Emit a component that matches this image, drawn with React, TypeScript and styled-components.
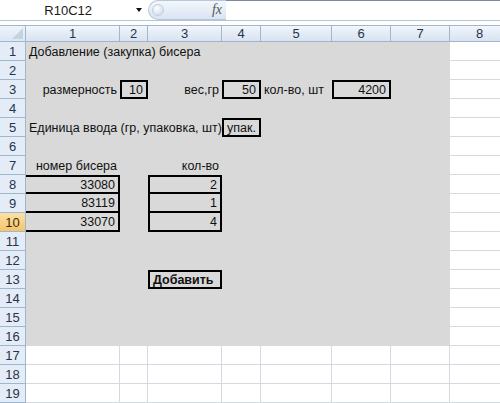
import React, { FunctionComponent } from "react";
import styled, { createGlobalStyle } from "styled-components";

const GlobalStyle = createGlobalStyle`
  html, body {
    margin: 0;
    padding: 0;
    background: #fff;
  }
  body {
    font-family: "Liberation Sans", Arial, sans-serif;
  }
`;

const COLS = [94, 28, 74, 39, 71, 59, 59, 60];
const TEMPLATE = `26px ${COLS.map((w) => w + "px").join(" ")}`;
const SHADED_ROWS = 16;
const SHADED_COLS = 7;

interface CellData {
  text?: string;
  span?: number;
  align?: "left" | "right";
  bold?: boolean;
  edges?: string;
}

const ROWS: CellData[][] = [
  [{ span: 3, text: "Добавление (закупка) бисера" }],
  [],
  [
    { text: "размерность", align: "right" },
    { text: "10", align: "right", edges: "trbl" },
    { text: "вес,гр", align: "right" },
    { text: "50", align: "right", edges: "trbl" },
    { text: "кол-во, шт" },
    { text: "4200", align: "right", edges: "trbl" },
  ],
  [],
  [{ span: 3, text: "Единица ввода (гр, упаковка, шт)" }, { text: "упак.", edges: "trbl" }],
  [],
  [{ text: "номер бисера", align: "right" }, {}, { text: "кол-во", align: "right" }],
  [{ text: "33080", align: "right", edges: "trb" }, {}, { text: "2", align: "right", edges: "trbl" }],
  [{ text: "83119", align: "right", edges: "rb" }, {}, { text: "1", align: "right", edges: "rbl" }],
  [{ text: "33070", align: "right", edges: "rb" }, {}, { text: "4", align: "right", edges: "rbl" }],
  [],
  [],
  [{}, {}, { text: "Добавить", bold: true, edges: "trbl" }],
  [],
  [],
  [],
  [],
  [],
  [],
];

const SELECTED_ROW = 10;

const App: FunctionComponent = () => (
  <>
    <GlobalStyle />
    <Window>
      <FormulaBar>
        <NameBox>
          <span>R10C12</span>
          <DropArrow />
        </NameBox>
        <FxButton>
          <Grip />
          <Fx>fx</Fx>
        </FxButton>
        <FormulaInput />
      </FormulaBar>
      <Sheet>
        <HeaderRow>
          <Corner>
            <svg width="12" height="12" viewBox="0 0 12 12">
              <polygon points="12,1 12,12 1,12" fill="#c5d2e2" />
            </svg>
          </Corner>
          {COLS.map((_, i) => (
            <ColHeader key={i}>{i + 1}</ColHeader>
          ))}
        </HeaderRow>
        {ROWS.map((cells, r) => (
          <SheetRow key={r} cells={cells} index={r + 1} />
        ))}
      </Sheet>
    </Window>
  </>
);

export default App;

interface RowProps {
  cells: CellData[];
  index: number;
}

const SheetRow: FunctionComponent<RowProps> = ({ cells, index }) => {
  const filled: CellData[] = [...cells];
  let used = filled.reduce((n, c) => n + (c.span || 1), 0);
  while (used < COLS.length) {
    filled.push({});
    used++;
  }
  let col = 0;
  return (
    <GridRow>
      <RowHeader $selected={index === SELECTED_ROW}>{index}</RowHeader>
      {filled.map((c, i) => {
        col += c.span || 1;
        const shaded = index <= SHADED_ROWS && col <= SHADED_COLS;
        return (
          <Cell
            key={i}
            $span={c.span || 1}
            $shaded={shaded}
            $align={c.align || "left"}
            $bold={!!c.bold}
            $edges={c.edges || ""}
          >
            {c.text}
          </Cell>
        );
      })}
    </GridRow>
  );
};

const Window = styled.div`
  width: 500px;
  height: 403px;
  overflow: hidden;
  display: flex;
  flex-direction: column;
  background: #fff;
`;

const FormulaBar = styled.div`
  display: flex;
  height: 20px;
  border-bottom: 1px solid #b9c4d2;
  margin-bottom: 4px;
  background: #fff;
`;

const NameBox = styled.div`
  width: 148px;
  display: flex;
  align-items: center;
  justify-content: flex-end;
  gap: 44px;
  padding-right: 6px;
  box-sizing: border-box;
  font-size: 13px;
  color: #1a1a1a;
`;

const DropArrow = styled.span`
  width: 0;
  height: 0;
  border-left: 3px solid transparent;
  border-right: 3px solid transparent;
  border-top: 4px solid #111;
`;

const FxButton = styled.div`
  width: 78px;
  display: flex;
  align-items: center;
  justify-content: space-between;
  padding: 0 4px 0 3px;
  box-sizing: border-box;
  border-radius: 10px 0 0 10px;
  border: 1px solid #b7c6db;
  border-right: none;
  background: linear-gradient(#f3f7fc, #d9e4f2);
`;

const Grip = styled.span`
  width: 10px;
  height: 10px;
  border-radius: 50%;
  background: radial-gradient(circle at 40% 35%, #ffffff, #c6d4e6);
  border: 1px solid #c2cfe0;
`;

const Fx = styled.span`
  font-family: "Liberation Serif", "Times New Roman", serif;
  font-style: italic;
  font-size: 14px;
  color: #555;
`;

const FormulaInput = styled.div`
  flex: 1;
  border-top: 1px solid #7b8a9c;
  background: #fff;
`;

const Sheet = styled.div`
  display: flex;
  flex-direction: column;
`;

const HeaderRow = styled.div`
  display: grid;
  grid-template-columns: ${TEMPLATE};
  height: 17px;
`;

const headerBase = `
  display: flex;
  align-items: center;
  justify-content: center;
  box-sizing: border-box;
  font-size: 13px;
  color: #27344a;
  border-right: 1px solid #9eb6ce;
  border-bottom: 1px solid #9eb6ce;
`;

const Corner = styled.div`
  ${headerBase}
  justify-content: flex-end;
  align-items: flex-end;
  padding: 0 2px 2px 0;
  border-top: 1px solid #9eb6ce;
  background: linear-gradient(#eef3fa, #dde6f2);
`;

const ColHeader = styled.div`
  ${headerBase}
  border-top: 1px solid #9eb6ce;
  background: linear-gradient(#f3f7fc 0%, #e4ebf5 50%, #d9e3f0 100%);
`;

const GridRow = styled.div`
  display: grid;
  grid-template-columns: ${TEMPLATE};
  height: 19px;
`;

const RowHeader = styled.div<{ $selected: boolean }>`
  ${headerBase}
  color: ${(p) => (p.$selected ? "#3b2a0a" : "#27344a")};
  background: ${(p) =>
    p.$selected ? "linear-gradient(#fbe0a8, #f5c46a)" : "#e4ecf7"};
`;

const Cell = styled.div<{
  $span: number;
  $shaded: boolean;
  $align: "left" | "right";
  $bold: boolean;
  $edges: string;
}>`
  grid-column: span ${(p) => p.$span};
  box-sizing: border-box;
  display: flex;
  align-items: center;
  justify-content: ${(p) => (p.$align === "right" ? "flex-end" : "flex-start")};
  padding: 0 3px;
  white-space: nowrap;
  overflow: hidden;
  font-size: 12.5px;
  font-weight: ${(p) => (p.$bold ? 700 : 400)};
  color: #111;
  background: ${(p) => (p.$shaded ? "#d9d9d9" : "#fff")};
  border-right: ${(p) =>
    p.$edges.includes("r") ? "2px solid #000" : p.$shaded ? "none" : "1px solid #d4d9e2"};
  border-bottom: ${(p) =>
    p.$edges.includes("b") ? "2px solid #000" : p.$shaded ? "none" : "1px solid #d4d9e2"};
  border-top: ${(p) => (p.$edges.includes("t") ? "2px solid #000" : "none")};
  border-left: ${(p) => (p.$edges.includes("l") ? "2px solid #000" : "none")};
`;
